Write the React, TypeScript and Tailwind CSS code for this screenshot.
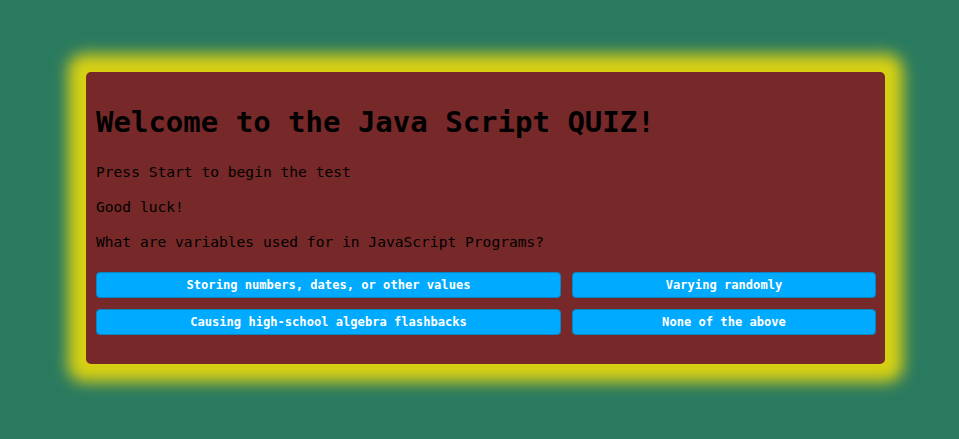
const answers = [
  'Storing numbers, dates, or other values',
  'Varying randomly',
  'Causing high-school algebra flashbacks',
  'None of the above',
];

export default function App() {
  return (
    <div className="w-[959px] h-[439px] bg-[#2a7a60] pt-[72px] pl-[86px] overflow-hidden font-['DejaVu_Sans_Mono',monospace]">
      <div className="w-[799px] h-[292px] bg-[#772929] rounded-[5px] shadow-[0_0_15px_18px_#d8d114] px-[10px] pt-[32px] text-black">
        <h1 className="text-[29px] leading-[37px] font-bold">Welcome to the Java Script QUIZ!</h1>
        <p className="mt-[21px] text-[14.6px] leading-[19px]">Press Start to begin the test</p>
        <p className="mt-[16px] text-[14.6px] leading-[19px]">Good luck!</p>
        <p className="mt-[16px] text-[14.6px] leading-[19px]">What are variables used for in JavaScript Programs?</p>
        <div className="mt-[21px] grid grid-cols-[465px_304px] gap-x-[11px] gap-y-[11px]">
          {answers.map((a) => (
            <button
              key={a}
              className="h-[26px] bg-[#00aaff] border border-[#0a85c2] rounded-[4px] text-white font-bold text-[12.1px] text-center"
            >
              {a}
            </button>
          ))}
        </div>
      </div>
    </div>
  );
}
